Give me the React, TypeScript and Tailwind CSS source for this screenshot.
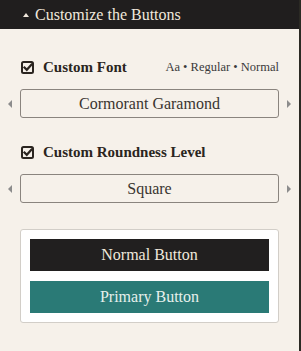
import React from 'react';

const serif = { fontFamily: '"Liberation Serif", "DejaVu Serif", serif' };

function CheckIcon() {
  return (
    <svg width="13" height="13" viewBox="0 0 13 13" className="shrink-0">
      <rect x="1" y="1" width="11" height="11" rx="1.5" fill="none" stroke="#2b2520" strokeWidth="2" />
      <path d="M3.5 6.5 L5.8 8.8 L10.5 3.6" fill="none" stroke="#2b2520" strokeWidth="2.2" strokeLinecap="square" />
    </svg>
  );
}

function Picker({ value }: { value: string }) {
  return (
    <div className="flex items-center">
      <div className="w-[20px] flex justify-center">
        <div className="w-0 h-0 border-y-[4px] border-y-transparent border-r-[4px] border-r-[#8c8c8c]" />
      </div>
      <div className="flex-1 h-[29px] border border-[#8a847e] rounded-[3px] flex items-center justify-center text-[16px] text-[#3a3530]">
        {value}
      </div>
      <div className="w-[20px] flex justify-center">
        <div className="w-0 h-0 border-y-[4px] border-y-transparent border-l-[4px] border-l-[#8c8c8c]" />
      </div>
    </div>
  );
}

export default function App() {
  return (
    <div className="w-[301px] h-[351px] bg-[#f6f1ea] border-r-2 border-[#2b2a24] flex flex-col overflow-hidden" style={serif}>
      {/* Header */}
      <div className="h-[29px] bg-[#201e1e] flex items-center pl-[23px] gap-[6px]">
        <div className="w-0 h-0 border-x-[3px] border-x-transparent border-b-[4px] border-b-[#f0e8dc]" />
        <span className="text-[16px] text-[#f0e8dc]">Customize the Buttons</span>
      </div>

      {/* Font */}
      <div className="mt-[28px] h-[20px] flex items-center justify-between pl-[21px] pr-[20px]">
        <div className="flex items-center gap-[9px]">
          <CheckIcon />
          <span className="text-[15px] leading-[20px] font-bold text-[#2b2520]">Custom Font</span>
        </div>
        <span className="text-[12.5px] leading-[20px] text-[#3a3a3a]">Aa • Regular • Normal</span>
      </div>
      <div className="mt-[12px]">
        <Picker value="Cormorant Garamond" />
      </div>

      {/* Roundness */}
      <div className="mt-[24px] h-[20px] flex items-center pl-[21px] gap-[9px]">
        <CheckIcon />
        <span className="text-[15px] leading-[20px] font-bold text-[#2b2520]">Custom Roundness Level</span>
      </div>
      <div className="mt-[12px]">
        <Picker value="Square" />
      </div>

      {/* Preview */}
      <div className="mt-[26px] mx-[20px] bg-white border border-[#d2cec8] rounded-[3px] p-[9px] flex flex-col gap-[10px]">
        <div className="h-[32px] bg-[#211f1f] text-[#f0e8dc] text-[16px] flex items-center justify-center">Normal Button</div>
        <div className="h-[32px] bg-[#2a7a76] text-[#e6f0ec] text-[16px] flex items-center justify-center">Primary Button</div>
      </div>
    </div>
  );
}
